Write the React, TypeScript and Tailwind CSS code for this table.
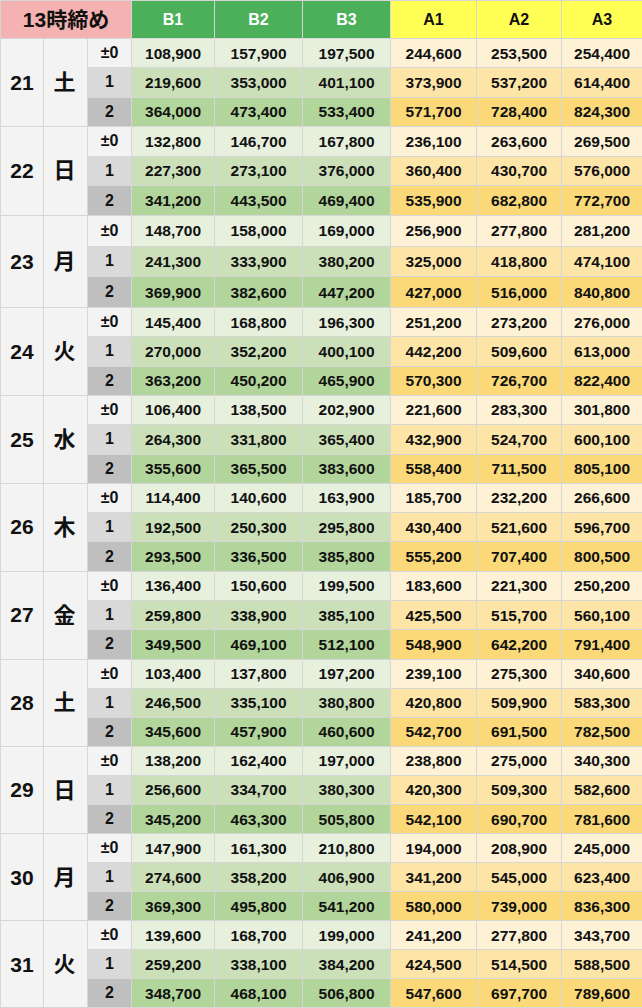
import React from 'react';

type Day = { d: number; w: string; rows: string[][] };

const days: Day[] = [
  { d: 21, w: '土', rows: [
    ['108,900', '157,900', '197,500', '244,600', '253,500', '254,400'],
    ['219,600', '353,000', '401,100', '373,900', '537,200', '614,400'],
    ['364,000', '473,400', '533,400', '571,700', '728,400', '824,300'],
  ] },
  { d: 22, w: '日', rows: [
    ['132,800', '146,700', '167,800', '236,100', '263,600', '269,500'],
    ['227,300', '273,100', '376,000', '360,400', '430,700', '576,000'],
    ['341,200', '443,500', '469,400', '535,900', '682,800', '772,700'],
  ] },
  { d: 23, w: '月', rows: [
    ['148,700', '158,000', '169,000', '256,900', '277,800', '281,200'],
    ['241,300', '333,900', '380,200', '325,000', '418,800', '474,100'],
    ['369,900', '382,600', '447,200', '427,000', '516,000', '840,800'],
  ] },
  { d: 24, w: '火', rows: [
    ['145,400', '168,800', '196,300', '251,200', '273,200', '276,000'],
    ['270,000', '352,200', '400,100', '442,200', '509,600', '613,000'],
    ['363,200', '450,200', '465,900', '570,300', '726,700', '822,400'],
  ] },
  { d: 25, w: '水', rows: [
    ['106,400', '138,500', '202,900', '221,600', '283,300', '301,800'],
    ['264,300', '331,800', '365,400', '432,900', '524,700', '600,100'],
    ['355,600', '365,500', '383,600', '558,400', '711,500', '805,100'],
  ] },
  { d: 26, w: '木', rows: [
    ['114,400', '140,600', '163,900', '185,700', '232,200', '266,600'],
    ['192,500', '250,300', '295,800', '430,400', '521,600', '596,700'],
    ['293,500', '336,500', '385,800', '555,200', '707,400', '800,500'],
  ] },
  { d: 27, w: '金', rows: [
    ['136,400', '150,600', '199,500', '183,600', '221,300', '250,200'],
    ['259,800', '338,900', '385,100', '425,500', '515,700', '560,100'],
    ['349,500', '469,100', '512,100', '548,900', '642,200', '791,400'],
  ] },
  { d: 28, w: '土', rows: [
    ['103,400', '137,800', '197,200', '239,100', '275,300', '340,600'],
    ['246,500', '335,100', '380,800', '420,800', '509,900', '583,300'],
    ['345,600', '457,900', '460,600', '542,700', '691,500', '782,500'],
  ] },
  { d: 29, w: '日', rows: [
    ['138,200', '162,400', '197,000', '238,800', '275,000', '340,300'],
    ['256,600', '334,700', '380,300', '420,300', '509,300', '582,600'],
    ['345,200', '463,300', '505,800', '542,100', '690,700', '781,600'],
  ] },
  { d: 30, w: '月', rows: [
    ['147,900', '161,300', '210,800', '194,000', '208,900', '245,000'],
    ['274,600', '358,200', '406,900', '341,200', '545,000', '623,400'],
    ['369,300', '495,800', '541,200', '580,000', '739,000', '836,300'],
  ] },
  { d: 31, w: '火', rows: [
    ['139,600', '168,700', '199,000', '241,200', '277,800', '343,700'],
    ['259,200', '338,100', '384,200', '424,500', '514,500', '588,500'],
    ['348,700', '468,100', '506,800', '547,600', '697,700', '789,600'],
  ] },
];

// row heights per day group (the 23rd block is a bit taller in the sheet)
const rowH: Record<number, string> = {
  21: 'h-[29.3px]',
  22: 'h-[29.7px]',
  23: 'h-[30.7px]',
  24: 'h-[29.3px]',
  25: 'h-[29.3px]',
  26: 'h-[29.3px]',
  27: 'h-[29.3px]',
  28: 'h-[29px]',
  29: 'h-[29.3px]',
  30: 'h-[29px]',
  31: 'h-[29px]',
};

const offsets = ['±0', '1', '2'];
const offsetBg = ['bg-[#f3f3f3]', 'bg-[#d9d9d9]', 'bg-[#bfbfbf]'];
const bBg = ['bg-[#e6f0dd]', 'bg-[#cbe0b9]', 'bg-[#b1d59a]'];
const aBg = ['bg-[#fef2d6]', 'bg-[#fde5a8]', 'bg-[#fbd978]'];

const cell = 'border border-[#d6d6d6] p-0 text-center align-middle';

export default function App() {
  return (
    <div className="w-[642px] h-[1008px] overflow-hidden bg-white font-['Liberation_Sans','Noto_Sans_CJK_JP',sans-serif] text-[#111]">
      <table className="w-[642px] border-collapse table-fixed">
        <colgroup>
          <col className="w-[43px]" />
          <col className="w-[44px]" />
          <col className="w-[44px]" />
          <col className="w-[83px]" />
          <col className="w-[88px]" />
          <col className="w-[88px]" />
          <col className="w-[86px]" />
          <col className="w-[85px]" />
          <col className="w-[81px]" />
        </colgroup>
        <thead>
          <tr className="h-[38px]">
            <th colSpan={3} className={`${cell} bg-[#f4b2b2] text-[21px] font-bold`}>
              13時締め
            </th>
            {['B1', 'B2', 'B3'].map((h) => (
              <th key={h} className={`${cell} bg-[#4caf5a] text-white text-[16px] font-bold`}>
                {h}
              </th>
            ))}
            {['A1', 'A2', 'A3'].map((h) => (
              <th key={h} className={`${cell} bg-[#ffff55] text-[16px] font-bold`}>
                {h}
              </th>
            ))}
          </tr>
        </thead>
        <tbody>
          {days.map((day) =>
            day.rows.map((vals, i) => (
              <tr key={`${day.d}-${i}`} className={rowH[day.d]}>
                {i === 0 && (
                  <>
                    <td rowSpan={3} className={`${cell} bg-[#f3f3f3] text-[21px] font-bold`}>
                      {day.d}
                    </td>
                    <td rowSpan={3} className={`${cell} bg-[#f3f3f3] text-[22px] font-bold pr-[2px]`}>
                      {day.w}
                    </td>
                  </>
                )}
                <td className={`${cell} ${offsetBg[i]} text-[16px] font-bold`}>{offsets[i]}</td>
                {vals.map((v, j) => (
                  <td
                    key={j}
                    className={`${cell} ${j < 3 ? bBg[i] : aBg[i]} text-[15.5px] font-bold`}
                  >
                    {v}
                  </td>
                ))}
              </tr>
            ))
          )}
        </tbody>
      </table>
    </div>
  );
}
